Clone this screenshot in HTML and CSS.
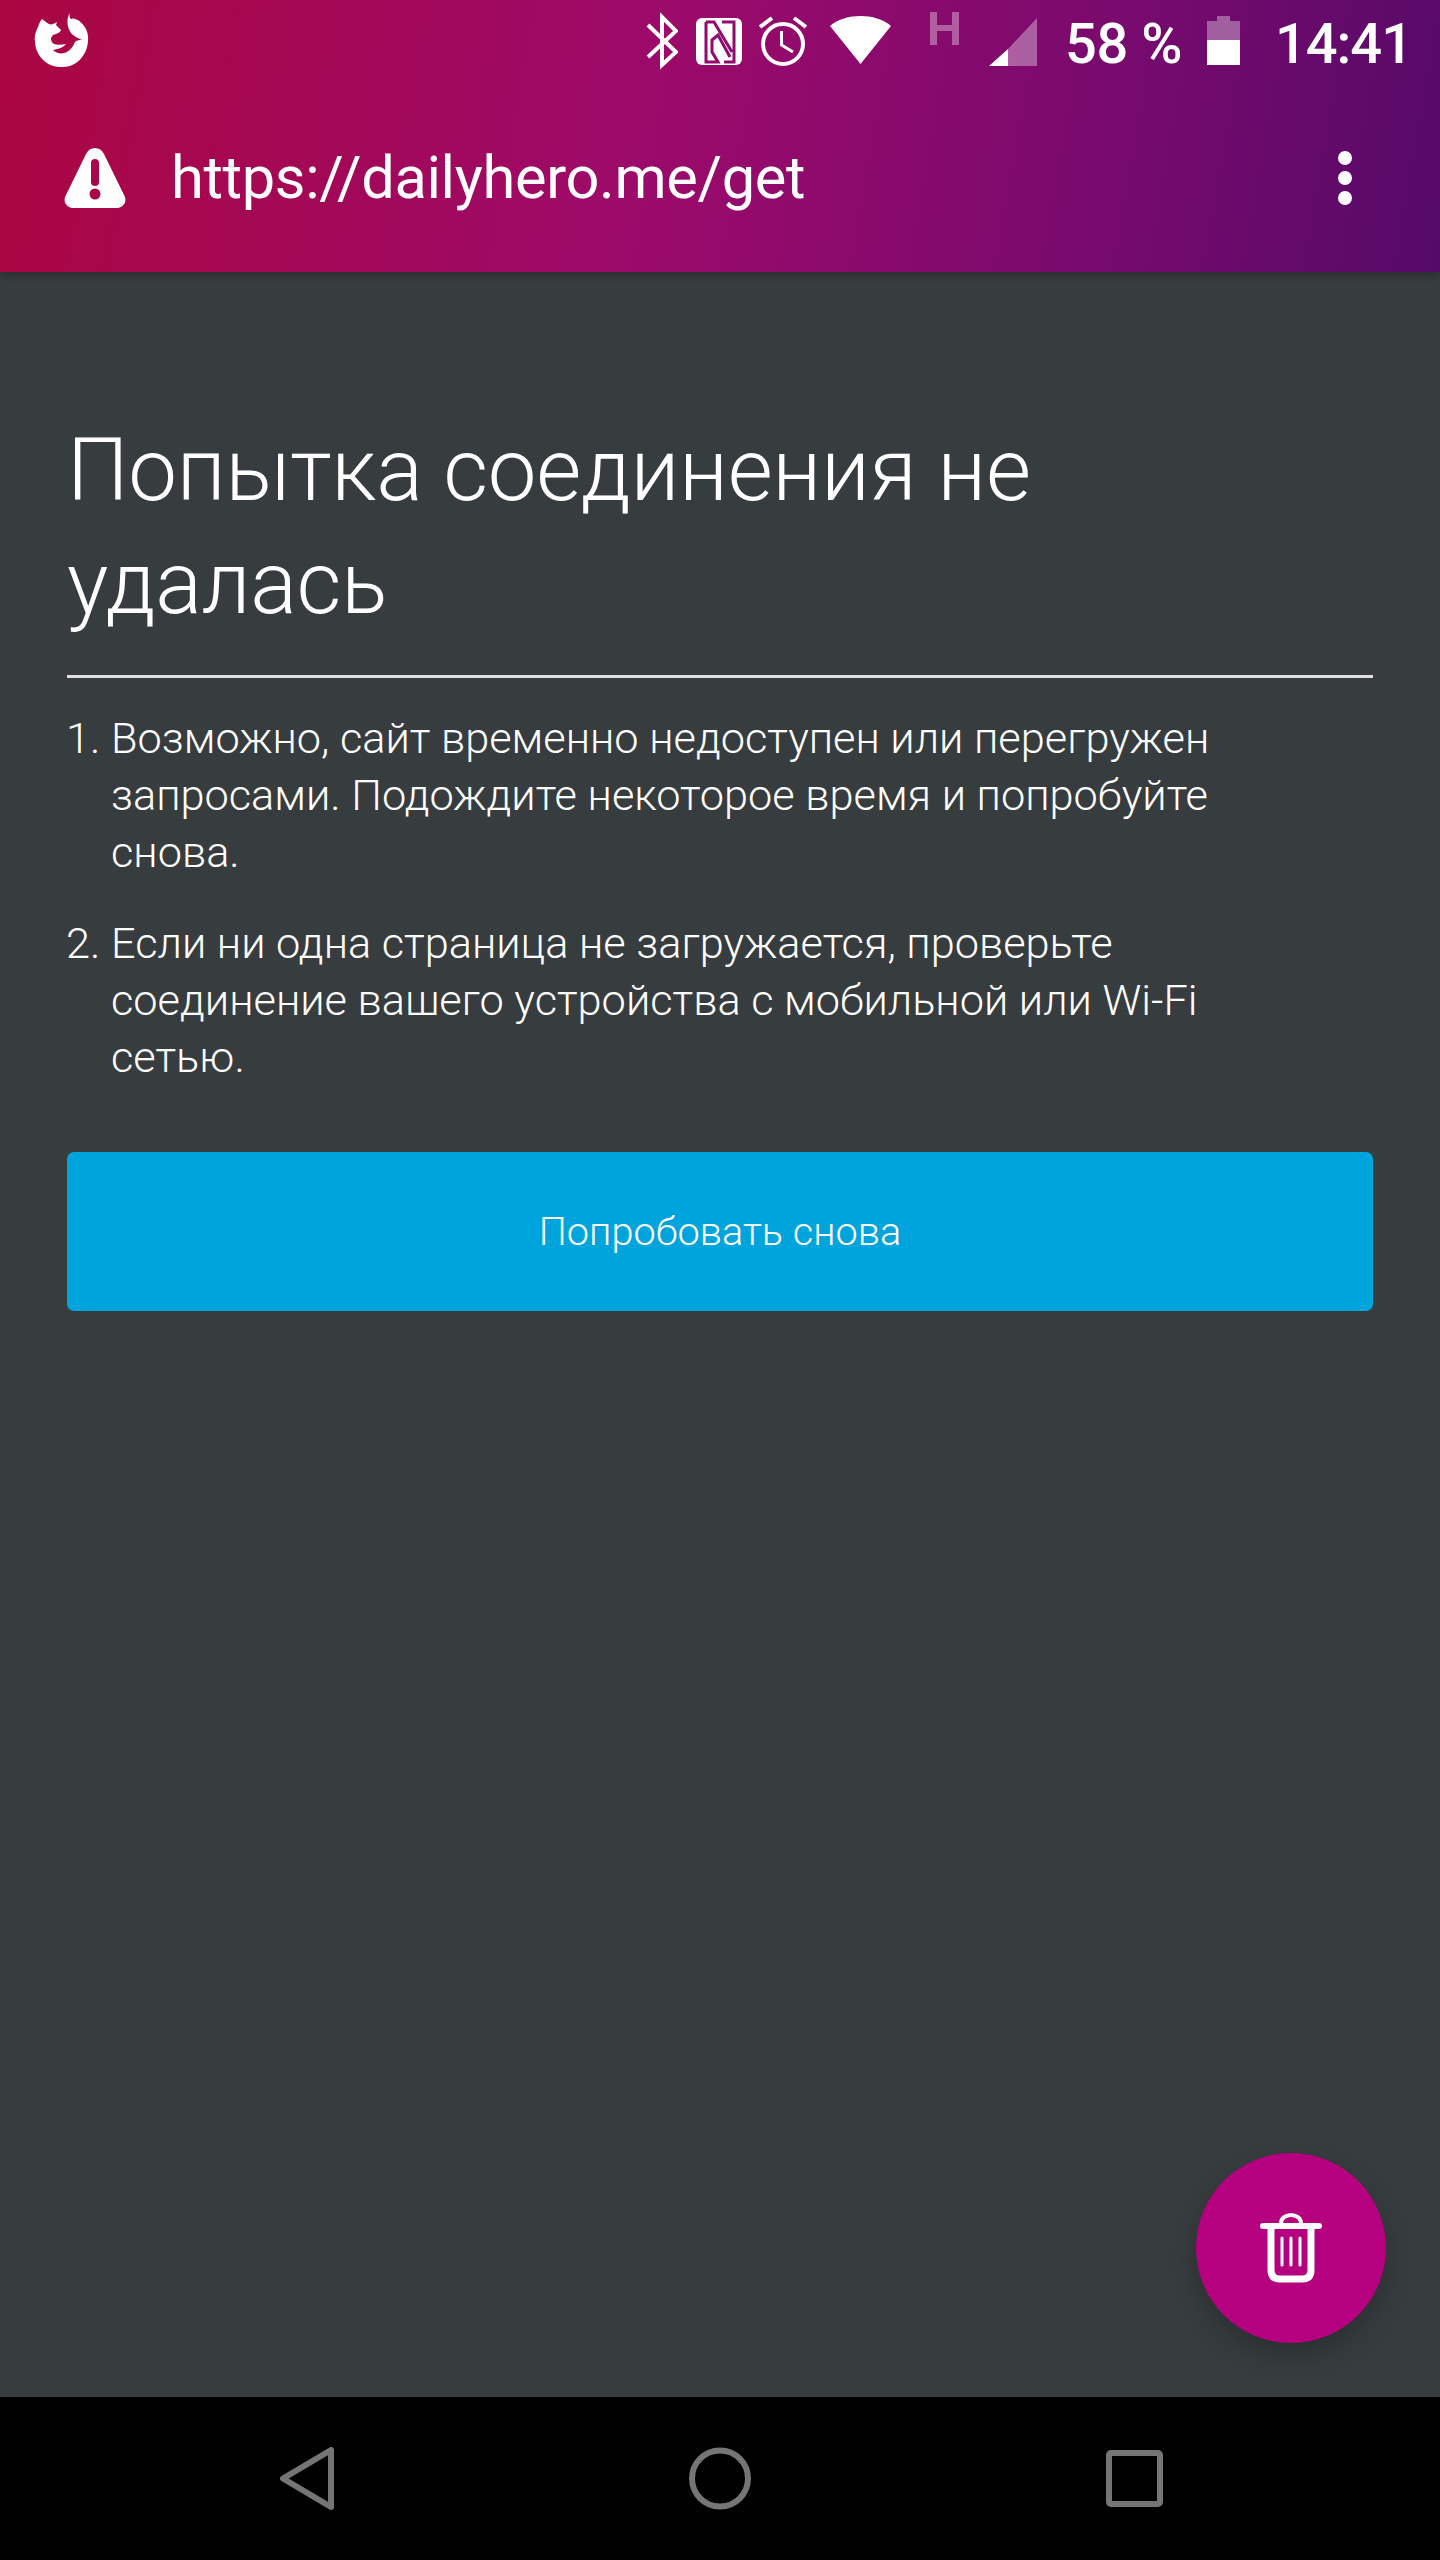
FILE: index.html
```html
<!DOCTYPE html>
<html lang="ru">
<head>
    <meta charset="UTF-8">
    <meta name="viewport" content="width=device-width, initial-scale=1.0">
    <title>Попытка соединения не удалась</title>
    <link rel="stylesheet" href="styles.css">
</head>
<body>
    <header class="top-bar">
        <div class="status-bar">
            <svg class="logo" viewBox="0 0 55 60" width="55" height="60">
                <path fill="#fff" d="M36 3 C35 7 36 9 38 9 C39 8 41 9 44 10 C51 15 55 22 54 31 C53 46 42 57 29 57 C14 58 2 47 1 32 C0 26 2 21 4 17 C5 14 6 11 8 9 L12 12 C14 14 17 15 19 14 L23 12 L22 15 L27 20 C26 23 22 24 19 25 L17 28 C17 31 18 33 20 34 C23 35 28 35 32 34 C30 37 25 39 19 40 C22 43 26 44 30 43 C35 42 39 37 41 32 C43 30 46 30 48 30 C44 28 41 27 39 25 C34 21 31 10 36 3 Z"/>
            </svg>
            <div class="status-icons">
                <svg class="icon-bt" viewBox="0 0 32 60" width="32" height="60">
                    <path fill="none" stroke="#fff" stroke-width="4" d="M2 15 L30 42 L16 55 V7 L30 21 L2 47"/>
                </svg>
                <svg class="icon-nfc" viewBox="0 0 46 60" width="46" height="60">
                    <rect x="0" y="8" width="46" height="47" rx="6" fill="#fff"/>
                    <path fill="none" stroke="#920a6e" stroke-width="3" d="M10 12 H18 L36 42 M10 12 V52 H22 L16 42 V30 L22 25 L34 47 M26 12 H38 V52 H28"/>
                </svg>
                <svg class="icon-alarm" viewBox="0 0 48 60" width="48" height="60">
                    <circle cx="24" cy="34" r="20" fill="none" stroke="#fff" stroke-width="4"/>
                    <path fill="none" stroke="#fff" stroke-width="3" d="M22.5 21 V35 L34 42"/>
                    <path fill="none" stroke="#fff" stroke-width="4" d="M1 17 L13 8 M47 17 L35 8"/>
                </svg>
                <svg class="icon-wifi" viewBox="0 0 61 60" width="61" height="60">
                    <path fill="#fff" d="M0 16 C8 9 19 6 30.5 6 C42 6 53 9 61 16 L30.5 54 Z"/>
                </svg>
                <svg class="icon-h" viewBox="0 0 29 60" width="29" height="60">
                    <path fill="#fff" fill-opacity="0.35" d="M0 2 H7 V15 H22 V2 H29 V35 H22 V21 H7 V35 H0 Z"/>
                </svg>
                <svg class="icon-signal" viewBox="0 0 48 60" width="48" height="60">
                    <path fill="#fff" fill-opacity="0.35" d="M48 8 V56 H19 V39 Z"/>
                    <path fill="#fff" d="M19 39 V56 H0 Z"/>
                </svg>
                <span class="status-text percent">58 %</span>
                <svg class="icon-battery" viewBox="0 0 33 60" width="33" height="60">
                    <path fill="#fff" fill-opacity="0.35" d="M10 6 H23 V11 H33 V30 H0 V11 H10 Z"/>
                    <rect x="0" y="30" width="33" height="25" fill="#fff"/>
                </svg>
                <span class="status-text time">14:41</span>
            </div>
        </div>
        <div class="url-bar">
            <svg class="warn-icon" viewBox="0 0 62 62" width="62" height="62">
                <path fill="#fff" fill-rule="evenodd" d="M31 1 C35 1 38 3 40 7 L60 48 C64 55 59 61 52 61 H10 C3 61 -2 55 2 48 L22 7 C24 3 27 1 31 1 Z M27 16 A4 4 0 0 1 35 16 V35 A4 4 0 0 1 27 35 Z M31 41.5 A5.5 5.5 0 1 0 31 52.5 A5.5 5.5 0 1 0 31 41.5 Z"/>
            </svg>
            <span class="url-text">https://dailyhero.me/get</span>
            <div class="menu-dots"><i></i><i></i><i></i></div>
        </div>
    </header>

    <main class="content">
        <h1 class="title">Попытка соединения не удалась</h1>
        <ol class="tips">
            <li>Возможно, сайт временно недоступен или перегружен запросами. Подождите некоторое время и попробуйте снова.</li>
            <li>Если ни одна страница не загружается, проверьте соединение вашего устройства с мобильной или Wi-Fi сетью.</li>
        </ol>
        <button class="retry-btn">Попробовать снова</button>

        <div class="fab">
            <svg viewBox="0 0 62 70" width="62" height="70">
                <g fill="none" stroke="#fff" stroke-linecap="round">
                    <path stroke-width="6" d="M3 13 H59"/>
                    <path stroke-width="4" d="M21 11 V10 C21 5 26 2 31 2 C36 2 41 5 41 10 V11"/>
                    <path stroke-width="7" stroke-linecap="butt" d="M11 13 V57 Q11 66 20 66 H42 Q51 66 51 57 V13"/>
                    <path stroke-width="3" d="M22 25 V52 M31 25 V52 M40 25 V52"/>
                </g>
            </svg>
        </div>
    </main>

    <nav class="nav-bar">
        <svg viewBox="0 0 54 63" width="54" height="63">
            <path fill="none" stroke="#757575" stroke-width="6" stroke-linejoin="round" d="M51 3 V60 L3 31.5 Z"/>
        </svg>
        <svg viewBox="0 0 62 63" width="62" height="63">
            <circle cx="31" cy="31.5" r="28" fill="none" stroke="#757575" stroke-width="6"/>
        </svg>
        <svg viewBox="0 0 57 57" width="57" height="57">
            <rect x="3" y="3" width="51" height="51" rx="2" fill="none" stroke="#757575" stroke-width="6"/>
        </svg>
    </nav>
</body>
</html>
```

FILE: styles.css
```css
* {
    box-sizing: border-box;
}

body {
    margin: 0;
    height: 2560px;
    display: flex;
    flex-direction: column;
    font-family: Roboto, "Noto Sans", sans-serif;
    color: #fff;
    background-color: #373c3f;
}

.top-bar {
    height: 272px;
    background: linear-gradient(100deg, #ab0641 0%, #9c0a6a 45%, #7a0a6e 75%, #550a68 100%);
    position: relative;
    z-index: 1;
    box-shadow: 0 3px 8px rgba(0, 0, 0, 0.25);
}

.status-bar {
    height: 83px;
    padding: 10px 28px 0 34px;
    display: flex;
    justify-content: space-between;
}

.status-icons {
    display: flex;
    height: 60px;
}

.status-icons svg {
    display: block;
}

.icon-nfc { margin-left: 18px; }
.icon-alarm { margin-left: 17px; }
.icon-wifi { margin-left: 23px; }
.icon-h { margin-left: 39px; }
.icon-signal { margin-left: 30px; }
.icon-battery { margin-left: 25px; }

.status-text {
    font-size: 56px;
    font-weight: 500;
    line-height: 68px;
}

.percent {
    margin-left: 28px;
    letter-spacing: -0.5px;
}

.time {
    margin-left: 35px;
    letter-spacing: -1px;
}

.url-bar {
    height: 189px;
    padding: 0 88px 0 64px;
    display: flex;
    align-items: center;
}

.url-text {
    margin-left: 45px;
    font-size: 59.5px;
    letter-spacing: -0.33px;
}

.menu-dots {
    margin-left: auto;
    display: flex;
    flex-direction: column;
    gap: 6px;
}

.menu-dots i {
    display: block;
    width: 14px;
    height: 14px;
    border-radius: 50%;
    background-color: #fff;
}

.content {
    flex: 1;
    position: relative;
    padding: 142px 67px 0;
}

.title {
    margin: 0;
    padding: 0 100px 35px 0;
    font-size: 87px;
    font-weight: 300;
    letter-spacing: -0.33px;
    line-height: 113px;
    border-bottom: 3px solid #e0e0e0;
}

.tips {
    margin: 32px 120px 0 0;
    padding-left: 44px;
    font-size: 43.3px;
    font-weight: 300;
    line-height: 57px;
}

.tips li {
    margin-bottom: 34px;
}

.retry-btn {
    display: block;
    width: 100%;
    height: 159px;
    margin-top: 66px;
    border: none;
    border-radius: 7px;
    background-color: #00a4dc;
    color: #fff;
    font-family: inherit;
    font-size: 39.7px;
    font-weight: 300;
}

.fab {
    position: absolute;
    right: 54px;
    bottom: 54px;
    width: 190px;
    height: 190px;
    border-radius: 50%;
    background-color: #b5007f;
    box-shadow: 0 12px 28px rgba(0, 0, 0, 0.22);
    display: flex;
    align-items: center;
    justify-content: center;
}

.nav-bar {
    height: 163px;
    background-color: #000;
    padding: 50px 277px 50px 280px;
    display: flex;
    justify-content: space-between;
    align-items: center;
}
```
